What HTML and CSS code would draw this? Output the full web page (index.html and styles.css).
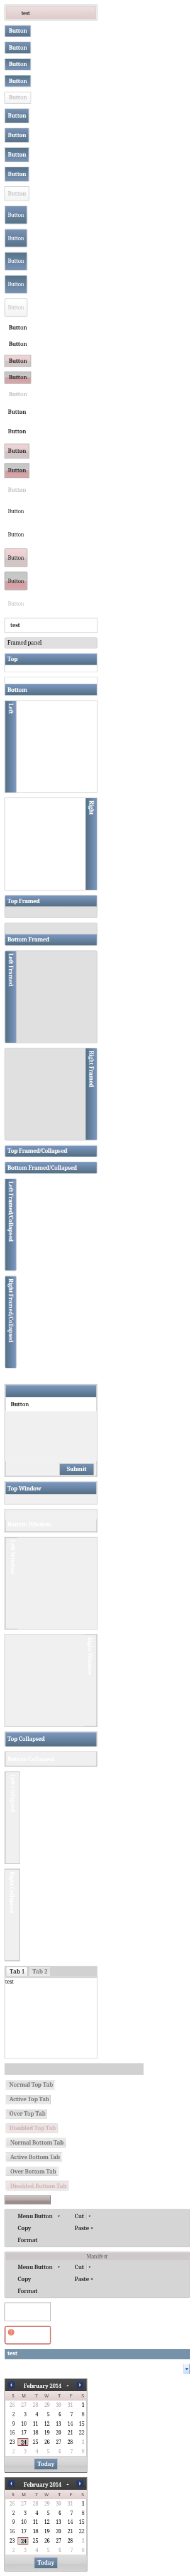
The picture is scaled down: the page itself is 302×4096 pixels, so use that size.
FILE: index.html
```
<!DOCTYPE html>
<html lang="en">
<head>
<meta charset="utf-8">
<title>Theme components</title>
<link rel="stylesheet" href="styles.css">
</head>
<body>
<div class="frame">
<div class="stage">
  <div class="progress-msg"><div class="progress-inner">test</div></div>

  <div class="btn">Button</div>
  <div class="btn">Button</div>
  <div class="btn down">Button</div>
  <div class="btn down">Button</div>
  <div class="btn off">Button</div>
  <div class="btn medium">Button</div>
  <div class="btn medium">Button</div>
  <div class="btn medium down">Button</div>
  <div class="btn medium down">Button</div>
  <div class="btn medium off">Button</div>
  <div class="btn large">Button</div>
  <div class="btn large">Button</div>
  <div class="btn large down">Button</div>
  <div class="btn large down">Button</div>
  <div class="btn large off">Button</div>

  <div class="btn flat">Button</div>
  <div class="btn flat">Button</div>
  <div class="btn flat over">Button</div>
  <div class="btn flat pressed">Button</div>
  <div class="btn flat faded">Button</div>
  <div class="btn medium flat">Button</div>
  <div class="btn medium flat">Button</div>
  <div class="btn medium flat over">Button</div>
  <div class="btn medium flat pressed">Button</div>
  <div class="btn medium flat faded">Button</div>
  <div class="btn large flat">Button</div>
  <div class="btn large flat">Button</div>
  <div class="btn large flat over">Button</div>
  <div class="btn large flat pressed">Button</div>
  <div class="btn large flat faded">Button</div>

  <div class="toolbar">test</div>
  <div class="framed-panel">Framed panel</div>

  <div class="panel short"><div class="head">Top</div><div class="fill"></div></div>
  <div class="panel short bottom"><div class="head">Bottom</div><div class="fill"></div></div>
  <div class="panel side"><div class="head">Left</div><div class="fill"></div></div>
  <div class="panel side right"><div class="head">Right</div><div class="fill"></div></div>
  <div class="panel framed"><div class="head">Top Framed</div><div class="fill"></div></div>
  <div class="panel framed bottom"><div class="head">Bottom Framed</div><div class="fill"></div></div>
  <div class="panel framed side"><div class="head">Left Framed</div><div class="fill"></div></div>
  <div class="panel framed side right"><div class="head">Right Framed</div><div class="fill"></div></div>
  <div class="panel framed closed"><div class="head">Top Framed/Collapsed</div></div>
  <div class="panel framed closed"><div class="head">Bottom Framed/Collapsed</div></div>
  <div class="panel framed side closed"><div class="head">Left Framed/Collapsed</div></div>
  <div class="panel framed side closed"><div class="head">Right Framed/Collapsed</div></div>

  <div class="window dialog">
    <div class="w-head"></div>
    <div class="w-bar">Button</div>
    <div class="w-body"></div>
    <div class="w-foot"><div class="btn submit">Submit</div></div>
  </div>
  <div class="window"><div class="w-head">Top Window</div><div class="w-body"></div></div>
  <div class="window w-bottom"><div class="w-head">Bottom Window</div><div class="w-body"></div></div>
  <div class="window w-side"><div class="w-head">Left Window</div><div class="w-body"></div></div>
  <div class="window w-side w-right"><div class="w-head">Right Window</div><div class="w-body"></div></div>
  <div class="folded"><div class="f-in blue">Top Collapsed</div></div>
  <div class="folded f-bottom"><div class="f-in">Bottom Collapsed</div></div>
  <div class="folded f-left"><div class="f-in">Left Collapsed</div></div>
  <div class="folded f-right"><div class="f-in">Right Collapsed</div></div>

  <div class="tabpanel">
    <div class="tabbar"><div class="tab current">Tab 1</div><div class="tab">Tab 2</div></div>
    <div class="tabstrip"></div>
    <div class="tabbody">test</div>
  </div>
  <div class="emptybar"></div>
  <div class="tab t1">Normal Top Tab</div>
  <div class="tab t2">Active Top Tab</div>
  <div class="tab t3">Over Top Tab</div>
  <div class="tab t4 dis">Disabled Top Tab</div>
  <div class="tab low t5">Normal Bottom Tab</div>
  <div class="tab low t6">Active Bottom Tab</div>
  <div class="tab low t7">Over Bottom Tab</div>
  <div class="tab low t8 dis">Disabled Bottom Tab</div>
  <div class="progressbar"></div>

  <div class="group">
    <div class="cells">
      <div class="cell">Menu Button<i class="sep"></i><i class="arrow"></i></div>
      <div class="cell cut">Cut<i class="sep"></i><i class="arrow"></i></div>
      <div class="cell">Copy</div>
      <div class="cell">Paste<i class="arrow near"></i></div>
      <div class="cell">Format</div>
    </div>
  </div>
  <div class="group">
    <div class="g-head">Manifest</div>
    <div class="cells">
      <div class="cell">Menu Button<i class="sep"></i><i class="arrow"></i></div>
      <div class="cell cut">Cut<i class="sep"></i><i class="arrow"></i></div>
      <div class="cell">Copy</div>
      <div class="cell">Paste<i class="arrow near"></i></div>
      <div class="cell">Format</div>
    </div>
  </div>

  <div class="field"></div>
  <div class="field error">
    <svg width="14" height="14" viewBox="0 0 14 14"><circle cx="7" cy="7" r="6.5" fill="#ef6f5b" stroke="#d96552"/><circle cx="7" cy="7" r="5.2" fill="none" stroke="#f9c2b6" stroke-width=".8"/><path d="M7 3.2v4.6M7 9.3v1.6" stroke="#fff" stroke-width="1.8"/></svg>
  </div>
  <div class="bluebar">test</div>
  <div class="trigger"><div class="trigger-face"><i class="arrow navy"></i></div></div>

  <div class="cal">
    <div class="c-head"><svg class="nav" width="15" height="15" viewBox="0 0 15 15"><rect width="15" height="15" rx="1" fill="#253767"/><path d="M0 3V1.500h15V3z" fill="#2d4380"/><path d="M9 3.500v8L5 7.500z" fill="#d0d0d0"/></svg><div class="month">February 2014<i class="arrow white"></i></div><svg class="nav" width="15" height="15" viewBox="0 0 15 15"><rect width="15" height="15" rx="1" fill="#253767"/><path d="M0 3V1.500h15V3z" fill="#2d4380"/><path d="M6 3.500v8L10 7.500z" fill="#d0d0d0"/></svg></div>
    <div class="c-days"><b>S</b><b>M</b><b>T</b><b>W</b><b>T</b><b>F</b><b>S</b></div>
    <div class="c-grid">
      <s>26</s><s>27</s><s>28</s><s>29</s><s>30</s><s>31</s><b>1</b>
      <b>2</b><b>3</b><b>4</b><b>5</b><b>6</b><b>7</b><b>8</b>
      <b>9</b><b>10</b><b>11</b><b>12</b><b>13</b><b>14</b><b>15</b>
      <b>16</b><b>17</b><b>18</b><b>19</b><b>20</b><b>21</b><b>22</b>
      <b>23</b><b class="sel">24</b><b>25</b><b>26</b><b>27</b><b>28</b><s>1</s>
      <s>2</s><s>3</s><s>4</s><s>5</s><s>6</s><s>7</s><s>8</s>
    </div>
    <div class="c-foot"><div class="btn today">Today</div></div>
  </div>
  <div class="cal">
    <div class="c-head"><svg class="nav" width="15" height="15" viewBox="0 0 15 15"><rect width="15" height="15" rx="1" fill="#253767"/><path d="M0 3V1.500h15V3z" fill="#2d4380"/><path d="M9 3.500v8L5 7.500z" fill="#d0d0d0"/></svg><div class="month">February 2014<i class="arrow white"></i></div><svg class="nav" width="15" height="15" viewBox="0 0 15 15"><rect width="15" height="15" rx="1" fill="#253767"/><path d="M0 3V1.500h15V3z" fill="#2d4380"/><path d="M6 3.500v8L10 7.500z" fill="#d0d0d0"/></svg></div>
    <div class="c-days"><b>S</b><b>M</b><b>T</b><b>W</b><b>T</b><b>F</b><b>S</b></div>
    <div class="c-grid">
      <s>26</s><s>27</s><s>28</s><s>29</s><s>30</s><s>31</s><b>1</b>
      <b>2</b><b>3</b><b>4</b><b>5</b><b>6</b><b>7</b><b>8</b>
      <b>9</b><b>10</b><b>11</b><b>12</b><b>13</b><b>14</b><b>15</b>
      <b>16</b><b>17</b><b>18</b><b>19</b><b>20</b><b>21</b><b>22</b>
      <b>23</b><b class="sel">24</b><b>25</b><b>26</b><b>27</b><b>28</b><s>1</s>
      <s>2</s><s>3</s><s>4</s><s>5</s><s>6</s><s>7</s><s>8</s>
    </div>
    <div class="c-foot"><div class="btn today">Today</div></div>
  </div>
</div>
</div>
</body>
</html>
```
FILE: styles.css
```
* { box-sizing: border-box; }
html { background: #fff; }
body { margin: 0; }

.frame { width: 302px; height: 4096px; overflow: hidden; contain: strict; }
.stage {
  width: 410px;
  height: 5561px;
  padding: 10px 0 10px 10px;
  display: flex;
  flex-direction: column;
  align-items: flex-start;
  gap: 10px;
  transform: scale(0.73655);
  transform-origin: 0 0;
  font: bold 12px/16px "Noto Serif", "DejaVu Serif Condensed", serif;
  letter-spacing: -0.33px;
  color: #333;
  white-space: nowrap;
}
.stage > * { flex: none; }

/* Progress message */
.progress-msg {
  width: 200px; height: 34px; padding: 2px;
  border: 1px solid #c9c9c9;
  background: linear-gradient(#fff, #fff) 30px 100% / 1px 3px no-repeat #f0f0f0;
}
.progress-inner {
  height: 28px; padding: 3px 0 0 32px;
  border: 1px solid #d1b2b3; border-radius: 2px;
  background: linear-gradient(#ece0e0, #dfcaca);
  font: 11px/22px "Noto Serif", "DejaVu Serif Condensed", serif;
  letter-spacing: 0; color: #111;
}

/* Buttons */
.btn {
  width: 57px; height: 26px;
  display: flex; align-items: center; justify-content: center;
  border: 1px solid #c9c9c9;
  background: linear-gradient(#7792b5, #57738a);
  color: #fff;
}
.medium { width: 53px; height: 32px; }
.large { width: 49px; height: 40px; padding-bottom: 1px; border-radius: 2px; font-weight: 400; font-size: 11px; letter-spacing: 0; }
.down { background: linear-gradient(#57738a, #7792b5); }
.off { background: linear-gradient(#fff, #f3f3f3); color: #c8c8c8; }
.flat { background: none; border-color: transparent; color: #333; }
.over { border-color: #999; background: linear-gradient(#efd5d8, #e9cdd0 50%, #cfc5c5 50%, #d6c5c5); }
.pressed { border-color: #8c8c8c; background: linear-gradient(#c5c5c5, #cacaca 50%, #d19fa3 50%, #d9a7aa); }
.faded { color: #c5c5c5; }

/* Panels */
.toolbar { width: 200px; height: 32px; padding-left: 11px; border: 1px solid #c9c9c9; line-height: 30px; }
.framed-panel {
  width: 200px; height: 24px; padding-left: 5px;
  border: 1px solid #c9c9c9; border-radius: 3px; background: #e0e0e0;
  font-weight: 400; font-size: 11.5px; line-height: 22px; letter-spacing: -0.2px; color: #000;
}
.panel {
  width: 200px; height: 50px; display: flex; flex-direction: column;
  border: 1px solid #c9c9c9; overflow: hidden;
}
.short { height: 41px; }
.head {
  flex: none; height: 24px; padding-left: 5px;
  background: linear-gradient(#7c98c1, #536f84);
  color: #fff; line-height: 23px;
}
.fill { flex: 1; border-top: 1px solid #c9c9c9; }
.framed { border-radius: 3px; background: #e0e0e0; }
.framed .head { box-shadow: inset 1px 0 #8aa0bd, inset -1px 0 #8aa0bd; }
.bottom { flex-direction: column-reverse; }
.bottom .fill { border-top: 0; border-bottom: 1px solid #c9c9c9; }
.side { height: 200px; flex-direction: row; }
.side .head {
  width: 24px; height: auto; padding: 5px 0 0;
  writing-mode: vertical-rl; line-height: 24px;
  background: linear-gradient(90deg, #536f84, #7c98c1);
  box-shadow: inset 1px 0 #8aa0bd;
}
.side .fill { border-width: 0 0 0 1px; border-style: solid; border-color: #c9c9c9; }
.side.right { flex-direction: row-reverse; }
.side.right .fill { border-width: 0 1px 0 0; }
.side.right .head { box-shadow: inset -1px 0 #8aa0bd; }
.closed { height: 26px; background: #6f8bad; }
.side.closed { width: 26px; height: 200px; }

/* Windows */
.window { width: 200px; height: 50px; display: flex; flex-direction: column; }
.dialog { height: 200px; margin-top: 24px; }
.w-head {
  flex: none; height: 28px; padding-left: 4px;
  border: 2px solid #c9c9c9; border-bottom: 0;
  background: linear-gradient(#7c98c1, #536f84) padding-box;
  color: #fff; line-height: 27px;
}
.w-body { flex: 1; border: 1px solid #c9c9c9; border-top: 0; background: #f0f0f0; }
.w-bar {
  height: 31px; padding-left: 11px; line-height: 30px;
  border: 2px solid #c9c9c9; border-top-width: 1px; border-bottom: 0; background: #fff;
}
.dialog .w-body { border-bottom: 0; }
.w-foot {
  height: 34px; padding: 5px 5px 0; display: flex; justify-content: flex-end;
  border: 2px solid #c9c9c9; border-top: 0; background: #f0f0f0;
}
.submit { width: 75px; letter-spacing: -0.2px; }
.w-bottom { flex-direction: column-reverse; }
.w-bottom .w-head { border: 2px solid #c9c9c9; border-top: 0; background: #f0f0f0; line-height: 22px; }
.w-bottom .w-body { border: 1px solid #c9c9c9; border-bottom: 0; }
.w-side { flex-direction: row; height: 200px; }
.w-side .w-head {
  width: 28px; height: auto; padding: 4px 0 0;
  border: 2px solid #c9c9c9; border-right: 0; background: #f0f0f0;
  writing-mode: vertical-rl; line-height: 22px;
}
.w-side .w-body { border: 1px solid #c9c9c9; border-left: 0; }
.w-right { flex-direction: row-reverse; }
.w-right .w-head { border: 2px solid #c9c9c9; border-left: 0; line-height: 28px; }
.w-right .w-body { border: 1px solid #c9c9c9; border-right: 0; }

.folded { width: 200px; height: 33px; padding: 2px 2px 1px; background: #c9c9c9; display: flex; color: #fff; }
.f-in { flex: 1; border-radius: 2px; background: #f0f0f0; padding-left: 4px; line-height: 28px; }
.f-in.blue { background: linear-gradient(#7c98c1, #536f84); }
.f-bottom { padding: 1px 2px 2px; }
.f-bottom .f-in { line-height: 30px; }
.f-left, .f-right { width: 33px; height: 200px; padding: 2px 1px 2px 2px; }
.f-right { padding: 2px 2px 2px 1px; }
.f-left .f-in, .f-right .f-in { writing-mode: vertical-rl; padding: 4px 0 0; line-height: 30px; }

/* Tabs */
.tabpanel { width: 200px; height: 200px; border: 1px solid #c9c9c9; }
.tabbar { height: 21px; padding: 1px 2px 0; display: flex; gap: 2px; background: #d1d1d1; }
.tab {
  height: 21px; margin-left: 2px; padding: 0 0 0 7px;
  border: 1px solid #bbb; border-bottom-color: #c9c9c9; border-radius: 2px 2px 0 0;
  background: linear-gradient(#dcdcdc, #eaeaea);
  box-shadow: inset 1px 1px #fff, inset -1px 0 #fff;
  color: #777; line-height: 18px; letter-spacing: -0.25px;
}
.tabbar .tab { width: 47px; height: 20px; margin: 0; border-bottom: 0; letter-spacing: 0; }
.tab.current { background: linear-gradient(#fff, #eaeaea); color: #333; }
.tabstrip { height: 4px; background: #e8e8e8; border: solid #c9c9c9; border-width: 1px 0; }
.tabbody { font-weight: 400; color: #000; letter-spacing: -0.5px; line-height: 15px; }
.emptybar { width: 300px; height: 25px; margin-bottom: 2px; background: #d1d1d1; }
.low {
  padding-left: 9px; line-height: 20px;
  border-color: #c9c9c9 #bbb #b5b5b5; border-radius: 0 0 3px 3px;
  background: linear-gradient(#eaeaea, #dcdcdc);
  box-shadow: inset 1px -1px #fff, inset -1px 0 #fff;
}
.dis { color: #c8b8b8; border-color: #ccc; background: linear-gradient(#e9dede, #f3e5e5); }
.low.dis { background: linear-gradient(#f3e5e5, #e9dede); }
.t1 { width: 107px; }
.t2 { width: 98px; }
.t3 { width: 90px; }
.t4 { width: 113px; }
.t5 { width: 131px; }
.t6 { width: 122px; }
.t7 { width: 114px; }
.t8 { width: 137px; }
.progressbar {
  width: 100px; height: 20px; border: 1px solid #8c8c8c; border-right-width: 2px;
  background: linear-gradient(#cbc3c3, #b3a7a7 55%, #a18f8f 55%, #9c8888);
}

/* Button groups */
.group {
  width: 400px; padding: 1px; border: 1px solid #b9b9b9; border-radius: 2px;
  background: #d5d5d5; box-shadow: inset 0 0 0 1px #e2e2e2;
}
.g-head {
  height: 16px; margin-bottom: 2px; padding-right: 1px; text-align: center;
  background: #cec9c8; color: #666; font-weight: 400; font-size: 11px; letter-spacing: 0;
}
.cells { display: grid; grid-template-columns: 123px 123px; grid-auto-rows: 26px; padding-left: 26px; }
.cell { display: flex; align-items: center; letter-spacing: -0.3px; }
.sep { width: 2px; height: 16px; margin: 0 3px 0 6px; border-left: 1px solid #bbb; border-right: 1px solid #fff; }
.cut .sep { margin-left: 5px; }
.arrow { width: 5px; height: 3px; background: #000; clip-path: polygon(0 0, 100% 0, 100% 34%, 50% 100%, 0 34%); }
.near { margin-left: 4px; }

/* Fields */
.field { width: 100px; height: 40px; border: 1px solid #a0a0a0; padding: 6px; }
.error { border: 1px solid #ab3529; border-radius: 4px; box-shadow: inset 0 0 0 1px #d0675c; }
.error svg { display: block; }
.bluebar { width: 400px; height: 22px; padding-left: 6px; background: #7692a9; color: #fff; line-height: 20px; }
.trigger { width: 15px; height: 22px; margin-left: 385px; padding-left: 1px; background: #fff; border-left: 1px solid #bcd3ee; }
.trigger-face {
  height: 22px; display: flex; align-items: center; justify-content: center;
  border-right: 1px solid #6f8bad; background: linear-gradient(#f2f8ff, #dceafb 50%, #bfdcff);
}
.navy { width: 7px; height: 4px; background: #204489; }

/* Calendar */
.cal { width: 178px; height: 203px; border: 1px solid #333; }
.c-head {
  height: 26px; padding: 5px 7px 0 6px; display: flex; justify-content: space-between;
  background: linear-gradient(#4a4a4a, #3b3b3b); color: #fff;
}
.month { flex: 1; display: flex; align-items: center; height: 19px; padding-left: 19px; letter-spacing: -0.4px; }
.white { background: #fff; margin-left: 11px; }
.c-days, .c-grid { display: grid; grid-template-columns: repeat(7, 25px); padding-left: 0; text-align: right; }
.c-days {
  height: 20px; border-bottom: 1px solid #d5b8b8; background: linear-gradient(#eee2e2, #e0cfcf);
  line-height: 18px;
}
.c-days b { font-weight: 400; font-size: 10px; padding-right: 5px; letter-spacing: 0; color: #444; }
.c-grid { grid-auto-rows: 20px; }
.c-grid b, .c-grid s {
  padding-right: 4px; font-weight: 400; font-size: 11px; line-height: 20px;
  text-decoration: none; color: #000; letter-spacing: -0.4px;
}
.c-grid s { color: #aaa; }
.c-grid b.sel {
  width: 23px; height: 16px; margin: 2px 0 0 2px; padding-right: 3px;
  border: 1px solid #8b0000; background: #d8d8d8; font-weight: 700; line-height: 15px;
}
.c-foot {
  height: 35px; padding-top: 4px; display: flex; justify-content: center;
  border-top: 1px solid #d5b8b8;
  background: linear-gradient(#dfdfdf, #d2d2d2 55%, #cacaca 55%, #d2d2d2);
}
.today { width: 52px; height: 25px; letter-spacing: 0; border-width: 1px; }
```
